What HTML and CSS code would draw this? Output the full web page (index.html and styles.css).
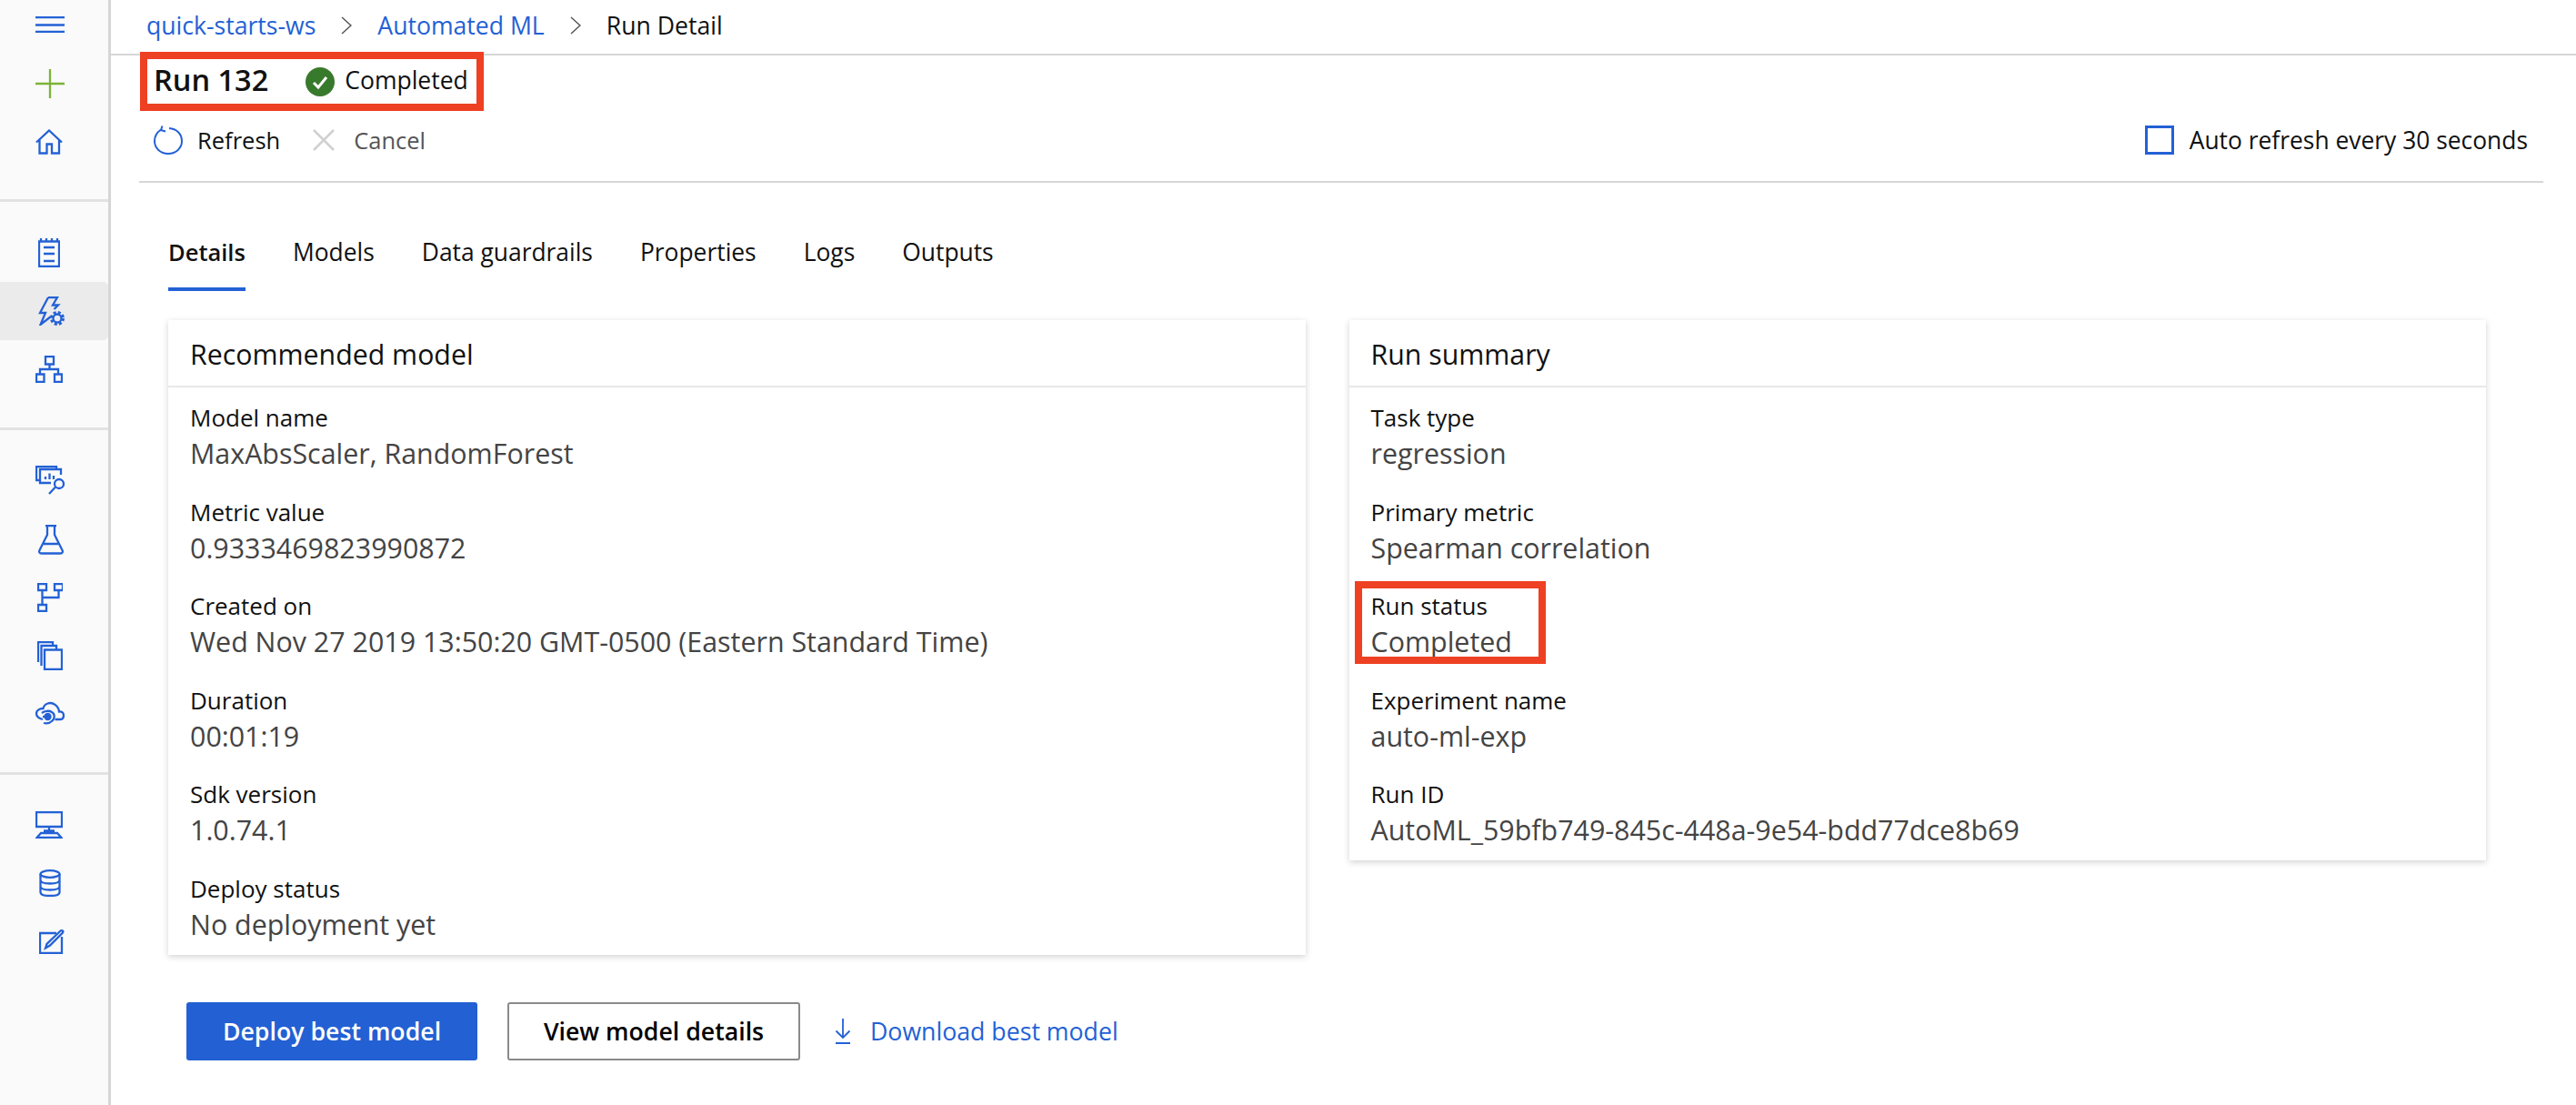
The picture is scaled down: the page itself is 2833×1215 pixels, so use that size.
FILE: index.html
```html
<!DOCTYPE html>
<html lang="en">
  <head>
    <meta charset="UTF-8" />
    <title>Run Detail</title>
    <link rel="stylesheet" href="styles.css">
  </head>

  <body>
    <nav class="sidebar">
      <div class="navGroup navGroup1">
        <div class="navItem navMenu">
          <svg class="icon" viewBox="0 0 32 18" width="32" height="18"><path d="M0 1H32M0 9.500H32M0 17H32"/></svg>
        </div>
        <div class="navItem">
          <svg class="icon iconGreen" viewBox="0 0 32 32" width="32" height="32"><path d="M0 16H32M16 0V32"/></svg>
        </div>
        <div class="navItem">
          <svg class="icon" viewBox="0 0 30 28" width="30" height="28"><path d="M1 14.500L15 1.500L29 14.500M4.500 12V26.500H12.500V16.500H18V26.500H26V12"/></svg>
        </div>
      </div>
      <div class="navGroup navGroup2">
        <div class="navItem">
          <svg class="icon iconNotes" viewBox="0 0 24 32" width="24" height="32"><path d="M1 3.500H23V31H1ZM3 0V4M9 0V4M15 0V4M21 0V4M6 10H18M6 17H18M6 25H18"/></svg>
        </div>
        <div class="navItem navActive">
          <svg class="icon iconNotes" viewBox="0 0 30 32" width="30" height="32"><path d="M11 1H21L16 9.500H22L17.500 14M11 1L2 18H8L2.500 31L14 22"/><circle cx="21" cy="24" r="4.500"/><circle class="gearTeeth" cx="21" cy="24" r="6.500"/></svg>
        </div>
        <div class="navItem">
          <svg class="icon" viewBox="0 0 30 30" width="30" height="30"><path d="M11 1H20V9.500H11ZM1 20.500H9.500V29H1ZM21 20.500H29V29H21ZM15.500 9.500V15M5 20.500V15H25V20.500"/></svg>
        </div>
      </div>
      <div class="navGroup navGroup2">
        <div class="navItem">
          <svg class="icon" viewBox="0 0 32 34" width="32" height="34"><path d="M4 16H1V1H23V4M28 10V4H5V19H17M11 15V12M15.500 15V8.500M20 15V11"/><circle cx="26" cy="20" r="5"/><path d="M22 23.500L15 31"/></svg>
        </div>
        <div class="navItem">
          <svg class="icon iconNotes" viewBox="0 0 28 33" width="28" height="33"><path d="M8 1H20M10 1V11L1.500 28C.5 30 1.500 31.500 3.500 31.500H24.500C26.500 31.500 27.500 30 26.500 28L18 11V1M6 21H22"/></svg>
        </div>
        <div class="navItem">
          <svg class="icon iconNarrow" viewBox="0 0 28 32" width="28" height="32"><path d="M1 1H10V8H1ZM19 1H28V8H19ZM1 24H10V31H1ZM5.500 8V24M5.500 16H23.500V8"/></svg>
        </div>
        <div class="navItem">
          <svg class="icon iconNarrow" viewBox="0 0 28 32" width="28" height="32"><path d="M8 31H27V9.500H8ZM4.500 27V5H21V9.500M1 23V1H17V5"/></svg>
        </div>
        <div class="navItem">
          <svg class="icon" viewBox="0 0 32 28" width="32" height="28"><path d="M21.500 20H27C29.500 20 31 18 31 15.500C31 13 29 11 26 11.500C25.500 5 19 .5 13.500 2.500C10.500 3.500 9 5.500 8.500 8C4 8 1 10.500 1 13.500C1 17 4 19 8 20"/><path d="M7 13C10 10.500 15 10 18 12C21.500 14 21.500 19 18.500 21.500C16 24 12.500 25 9 24"/><circle class="iconDot" cx="13.500" cy="17" r="3"/><path d="M8 17H13"/></svg>
        </div>
      </div>
      <div class="navGroup navGroup3">
        <div class="navItem">
          <svg class="icon" viewBox="0 0 30 30" width="30" height="30"><path d="M1 1H29V17H1ZM15 17V22M9 21.500H21M6 24L1.500 29H28.500L24 24Z"/></svg>
        </div>
        <div class="navItem">
          <svg class="icon iconDb" viewBox="0 0 24 30" width="24" height="30"><ellipse cx="12" cy="5" rx="10.500" ry="3.800"/><path d="M1.500 5V25C1.500 27.500 6 29 12 29C18 29 22.500 27.500 22.500 25V5M1.500 11.500C1.500 14 6 15.500 12 15.500C18 15.500 22.500 14 22.500 11.500M1.500 18.500C1.500 21 6 22.500 12 22.500C18 22.500 22.500 21 22.500 18.500"/></svg>
        </div>
        <div class="navItem">
          <svg class="icon iconDb" viewBox="0 0 28 28" width="28" height="28"><path d="M19 5H1V27H25V9"/><path d="M7 21.500L8.500 17L23 3C24.500 1.500 27.500 2 26 4.500L12 18.500Z"/></svg>
        </div>
      </div>
    </nav>

    <main class="main">
      <div class="breadcrumb">
        <a class="link">quick-starts-ws</a>
        <svg class="chevron" viewBox="0 0 12 20" width="12" height="20"><path d="M1 1L11 10L1 19"/></svg>
        <a class="link">Automated ML</a>
        <svg class="chevron" viewBox="0 0 12 20" width="12" height="20"><path d="M1 1L11 10L1 19"/></svg>
        <span>Run Detail</span>
      </div>

      <div class="runTitle">
        <h1>Run 132</h1>
        <svg class="statusIcon" viewBox="0 0 32 32" width="32" height="32"><circle cx="16" cy="16" r="16"/><path d="M9 17L14 22L23 11"/></svg>
        <span>Completed</span>
      </div>

      <div class="toolbar">
        <div class="toolBtn">
          <svg class="refreshIcon" viewBox="0 0 32 32" width="32" height="32"><path d="M8 4.500C3 8 1 12 1 17C1 25 7.500 31 16 31C24.500 31 31 25 31 17C31 9 25 3.500 17 3M9.500 .5L8 5L13 6.500"/></svg>
          <span>Refresh</span>
        </div>
        <div class="toolBtn toolDisabled">
          <svg class="cancelIcon" viewBox="0 0 24 24" width="24" height="24"><path d="M1 1L23 23M23 1L1 23"/></svg>
          <span>Cancel</span>
        </div>
        <div class="autoRefresh">
          <span class="checkbox"></span>
          <span>Auto refresh every 30 seconds</span>
        </div>
      </div>

      <div class="content">
        <div class="tabs">
          <div class="tab tabActive">Details</div>
          <div class="tab">Models</div>
          <div class="tab">Data guardrails</div>
          <div class="tab">Properties</div>
          <div class="tab">Logs</div>
          <div class="tab">Outputs</div>
        </div>

        <div class="cards">
          <section class="card">
            <h2>Recommended model</h2>
            <div class="cardBody">
              <div class="field"><div class="label">Model name</div><div class="value">MaxAbsScaler, RandomForest</div></div>
              <div class="field"><div class="label">Metric value</div><div class="value">0.9333469823990872</div></div>
              <div class="field"><div class="label">Created on</div><div class="value">Wed Nov 27 2019 13:50:20 GMT-0500 (Eastern Standard Time)</div></div>
              <div class="field"><div class="label">Duration</div><div class="value">00:01:19</div></div>
              <div class="field"><div class="label">Sdk version</div><div class="value">1.0.74.1</div></div>
              <div class="field"><div class="label">Deploy status</div><div class="value">No deployment yet</div></div>
            </div>
          </section>

          <section class="card">
            <h2>Run summary</h2>
            <div class="cardBody">
              <div class="field"><div class="label">Task type</div><div class="value">regression</div></div>
              <div class="field"><div class="label">Primary metric</div><div class="value">Spearman correlation</div></div>
              <div class="field fieldMarked"><div class="label">Run status</div><div class="value">Completed</div></div>
              <div class="field"><div class="label">Experiment name</div><div class="value">auto-ml-exp</div></div>
              <div class="field"><div class="label">Run ID</div><div class="value">AutoML_59bfb749-845c-448a-9e54-bdd77dce8b69</div></div>
            </div>
          </section>
        </div>

        <div class="actions">
          <button class="btn btnPrimary">Deploy best model</button>
          <button class="btn btnOutline">View model details</button>
          <a class="download link">
            <svg class="downloadIcon" viewBox="0 0 18 28" width="18" height="28"><path d="M9 0V21M1.500 13.500L9 21L16.500 13.500M1 27H17"/></svg>
            <span>Download best model</span>
          </a>
        </div>
      </div>
    </main>
  </body>
</html>
```

FILE: styles.css
```css
* {
  box-sizing: border-box;
}

body {
  margin: 0;
  height: 1215px;
  overflow: hidden;
  display: flex;
  background: #fff;
  color: #111;
  font-family: "Open Sans", "Liberation Sans", sans-serif;
  font-size: 26px;
}

h1,
h2 {
  margin: 0;
  font-weight: 400;
}

/* sidebar */
.sidebar {
  flex: none;
  width: 122px;
  background: #fafafa;
  border-right: 3px solid #d6d6d6;
}
.navGroup {
  border-bottom: 3px solid #e2e2e2;
}
.navGroup1 {
  height: 222px;
}
.navGroup2 {
  padding: 24px 0 32px;
}
.navGroup3 {
  padding-top: 23px;
  border-bottom: none;
}
.navItem {
  height: 64px;
  padding-left: 39px;
  display: flex;
  align-items: center;
}
.navMenu {
  height: 54px;
  margin-bottom: 6px;
}
.navActive {
  background: #ebebeb;
  border-radius: 0 5px 5px 0;
}
.icon {
  fill: none;
  stroke: #2361d5;
  stroke-width: 2.300;
}
.iconGreen {
  stroke: #7cb33a;
}
.iconNotes {
  margin-left: 3px;
}
.iconNarrow {
  margin-left: 2px;
}
.iconDb {
  margin-left: 4px;
}
.iconDot {
  fill: #2361d5;
}
.gearTeeth {
  stroke-width: 3;
  stroke-dasharray: 3 2.100;
}

/* top */
.main {
  flex: 1;
  min-width: 0;
}
.breadcrumb {
  height: 61px;
  padding: 0 0 3px 39px;
  border-bottom: 2px solid #d6d6d6;
  font-size: 26.600px;
  display: flex;
  align-items: center;
  gap: 28px;
}
.link {
  color: #2361d5;
}
.chevron {
  fill: none;
  stroke: #555;
  stroke-width: 1.500;
}
.runTitle {
  width: 378px;
  height: 65px;
  margin: -4px 0 0 32px;
  padding: 0 0 4px 7px;
  border: 8px solid #ee4023;
  font-size: 26.500px;
  display: flex;
  align-items: center;
}
.runTitle h1 {
  font-size: 32.500px;
  font-weight: 600;
  margin-right: 41px;
}
.statusIcon {
  flex: none;
  margin: 4px 11px 0 0;
}
.statusIcon circle {
  fill: #387a2b;
}
.statusIcon path {
  fill: none;
  stroke: #fff;
  stroke-width: 3;
}
.toolbar {
  height: 79px;
  margin: 0 36px 0 31px;
  padding: 0 17px 14px 16px;
  border-bottom: 2px solid #d6d6d6;
  display: flex;
  align-items: center;
}
.toolBtn {
  font-size: 25.500px;
  display: flex;
  align-items: center;
  margin-right: 36px;
}
.refreshIcon {
  fill: none;
  stroke: #2361d5;
  stroke-width: 2;
  margin-right: 16px;
}
.toolDisabled {
  color: #555;
}
.cancelIcon {
  fill: none;
  stroke: #d0d0d0;
  stroke-width: 2.500;
  margin-right: 21px;
}
.autoRefresh {
  font-size: 26.400px;
  margin-left: auto;
  display: flex;
  align-items: center;
}
.checkbox {
  width: 32px;
  height: 32px;
  margin-right: 17px;
  border: 3px solid #2361d5;
}

/* tabs and cards */
.content {
  padding: 56px 99px 0 63px;
}
.tabs {
  font-size: 26.400px;
  display: flex;
  gap: 52px;
}
.tab {
  height: 63px;
  line-height: 40px;
}
.tabActive {
  font-size: 25.500px;
  font-weight: 600;
  border-bottom: 4px solid #2361d5;
}
.cards {
  margin-top: 32px;
  display: grid;
  grid-template-columns: 1fr 1fr;
  gap: 48px;
  align-items: start;
}
.card {
  background: #fff;
  box-shadow: 0 2px 7px rgba(0, 0, 0, 0.18);
}
.card h2 {
  height: 74px;
  padding-left: 24px;
  border-bottom: 2px solid #e8e8e8;
  font-size: 30.300px;
  line-height: 76px;
}
.cardBody {
  padding: 13px 24px;
}
.field {
  height: 80px;
  line-height: 40px;
  margin-bottom: 23.600px;
}
.field:last-child {
  margin-bottom: 0;
}
.value {
  font-size: 30.400px;
  color: #444;
}
.fieldMarked {
  position: relative;
}
.fieldMarked::after {
  content: "";
  box-sizing: border-box;
  position: absolute;
  top: -7px;
  bottom: -4px;
  left: -18px;
  width: 210px;
  border: 8px solid #ee4023;
}

/* buttons */
.actions {
  margin-top: 52px;
  padding-left: 20px;
  display: flex;
  align-items: center;
}
.btn {
  height: 64px;
  border-radius: 3px;
  font-family: inherit;
  font-size: 26.700px;
  font-weight: 600;
}
.btnPrimary {
  width: 320px;
  margin-right: 33px;
  background: #2360d3;
  border: none;
  color: #fff;
}
.btnOutline {
  width: 322px;
  margin-right: 38px;
  background: #fff;
  border: 2px solid #8a8a8a;
  color: #000;
}
.download {
  font-size: 26.700px;
  display: flex;
  align-items: center;
  gap: 21px;
}
.downloadIcon {
  fill: none;
  stroke: #2361d5;
  stroke-width: 1.800;
}
```
